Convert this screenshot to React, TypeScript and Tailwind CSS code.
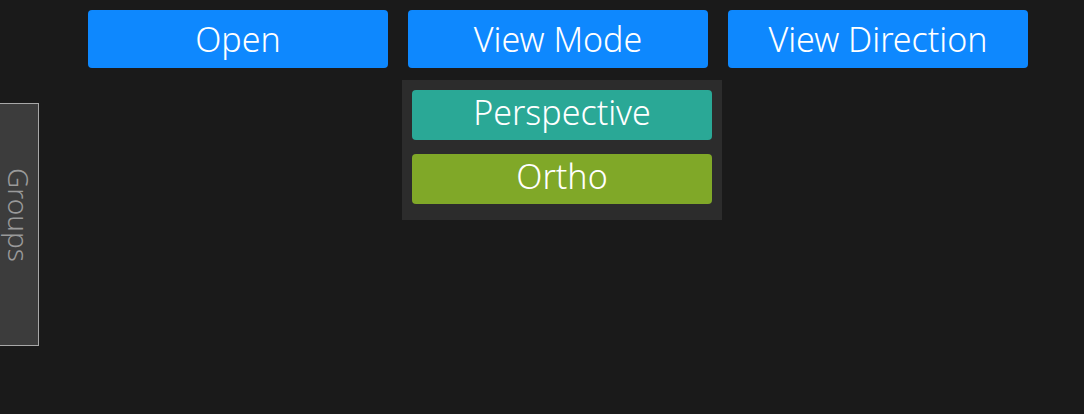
import React from "react";

const font = { fontFamily: '"Noto Sans", "Liberation Sans", sans-serif' };

export default function App() {
  return (
    <div
      className="relative h-[414px] w-[1084px] overflow-hidden bg-[#1a1a1a] font-light"
      style={font}
    >
      <div className="flex gap-5 pl-[88px] pt-[10px]">
        {["Open", "View Mode", "View Direction"].map((t) => (
          <button
            key={t}
            className="flex h-[58px] w-[300px] items-center justify-center rounded-[4px] bg-[#0e88fe] pb-[1px] text-[34px] font-light leading-none text-white"
          >
            {t}
          </button>
        ))}
      </div>

      <div className="mt-[35px] flex">
        <div className="flex h-[243px] w-[39px] items-center justify-center border border-l-0 border-[#a8a8a8] bg-[#3c3c3c] pb-[20px]">
          <span className="rotate-90 whitespace-nowrap text-[28px] font-light leading-none text-[#9a9a9a]">
            Groups
          </span>
        </div>
      </div>

      <div className="absolute left-[402px] top-[80px] flex w-[320px] flex-col gap-[14px] bg-[#2c2c2c] px-[10px] pb-[16px] pt-[10px]">
        <button className="flex h-[50px] w-[300px] items-center justify-center rounded-[4px] bg-[#2aa896] pb-[7px] text-[34px] font-light leading-none text-white">
          Perspective
        </button>
        <button className="flex h-[50px] w-[300px] items-center justify-center rounded-[4px] bg-[#80a828] pb-[7px] text-[34px] font-light leading-none text-white">
          Ortho
        </button>
      </div>
    </div>
  );
}
